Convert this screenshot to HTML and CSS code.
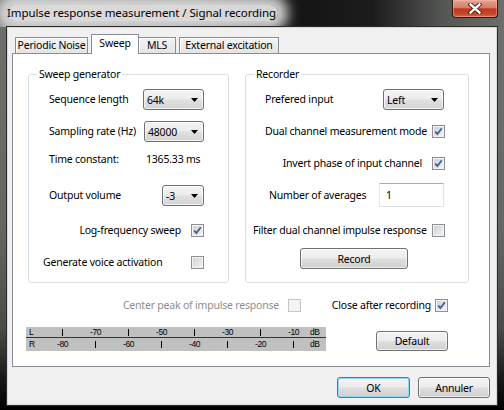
FILE: index.html
```html
<!DOCTYPE html>
<html>
<head>
<meta charset="utf-8">
<link rel="stylesheet" href="styles.css">
</head>
<body>
<div class="window">
  <div class="titlebar">
    <span class="title">Impulse response measurement / Signal recording</span>
    <div class="close">
      <svg width="14" height="11" viewBox="0 0 14 11">
        <path d="M2.5 1.5 L11.5 9.5 M11.5 1.5 L2.5 9.5" stroke="#3a1710" stroke-width="4.2" stroke-linecap="square" fill="none"/>
        <path d="M2.5 1.5 L11.5 9.5 M11.5 1.5 L2.5 9.5" stroke="#ffffff" stroke-width="2.4" stroke-linecap="square" fill="none"/>
      </svg>
    </div>
  </div>
  <div class="client">
    <div class="tabs">
      <div class="tab t1">Periodic Noise</div>
      <div class="tab t2 sel">Sweep</div>
      <div class="tab t3">MLS</div>
      <div class="tab t4">External excitation</div>
    </div>
    <div class="panel">
      <div class="groups">
        <div class="group g1">
          <div class="gtitle">Sweep generator</div>
          <div class="rows">
            <div class="row sb">
              <span>Sequence length</span>
              <div class="combo w61"><span>64k</span><svg width="7" height="4" viewBox="0 0 7 4"><path d="M0 0H7L3.5 4Z" fill="#000"/></svg></div>
            </div>
            <div class="row sb m10">
              <span>Sampling rate (Hz)</span>
              <div class="combo w60"><span>48000</span><svg width="7" height="4" viewBox="0 0 7 4"><path d="M0 0H7L3.5 4Z" fill="#000"/></svg></div>
            </div>
            <div class="row m6">
              <span class="tclabel">Time constant:</span>
              <span>1365.33 ms</span>
            </div>
            <div class="row sb m14">
              <span>Output volume</span>
              <div class="combo w42"><span>-3</span><svg width="7" height="4" viewBox="0 0 7 4"><path d="M0 0H7L3.5 4Z" fill="#000"/></svg></div>
            </div>
            <div class="row end m13">
              <span>Log-frequency sweep</span>
              <span class="cb"><svg width="9" height="9" viewBox="0 0 9 9"><path d="M1.2 4.6 L3.4 7 L7.8 1.2" stroke="#4a5f97" stroke-width="1.9" fill="none"/></svg></span>
            </div>
            <div class="row sb m10 out6">
              <span>Generate voice activation</span>
              <span class="cb"></span>
            </div>
          </div>
        </div>
        <div class="group g2">
          <div class="gtitle">Recorder</div>
          <div class="rows">
            <div class="row sb m1">
              <span>Prefered input</span>
              <div class="combo w61"><span>Left</span><svg width="7" height="4" viewBox="0 0 7 4"><path d="M0 0H7L3.5 4Z" fill="#000"/></svg></div>
            </div>
            <div class="row sb m10">
              <span>Dual channel measurement mode</span>
              <span class="cb cbr"><svg width="9" height="9" viewBox="0 0 9 9"><path d="M1.2 4.6 L3.4 7 L7.8 1.2" stroke="#4a5f97" stroke-width="1.9" fill="none"/></svg></span>
            </div>
            <div class="row end m10">
              <span>Invert phase of input channel</span>
              <span class="cb cbr"><svg width="9" height="9" viewBox="0 0 9 9"><path d="M1.2 4.6 L3.4 7 L7.8 1.2" stroke="#4a5f97" stroke-width="1.9" fill="none"/></svg></span>
            </div>
            <div class="row sb m10">
              <span class="in4">Number of averages</span>
              <div class="edit">1</div>
            </div>
            <div class="row sb m13 out12">
              <span>Filter dual channel impulse response</span>
              <span class="cb cbr"></span>
            </div>
            <div class="row m7 h21">
              <button class="btn record">Record</button>
            </div>
          </div>
        </div>
      </div>
      <div class="opts">
        <div class="opt1">
          <span class="dis">Center peak of impulse response</span>
          <span class="cb disabled"></span>
        </div>
        <div class="opt2">
          <span>Close after recording</span>
          <span class="cb"><svg width="9" height="9" viewBox="0 0 9 9"><path d="M1.2 4.6 L3.4 7 L7.8 1.2" stroke="#4a5f97" stroke-width="1.9" fill="none"/></svg></span>
        </div>
      </div>
      <div class="meterrow">
        <div class="meter">
          <div class="mrow mtop">
            <span class="ch">L</span><span><i class="tk"></i></span><span>-70</span><span><i class="tk"></i></span><span>-50</span><span><i class="tk"></i></span><span>-30</span><span><i class="tk"></i></span><span>-10</span><span class="db">dB</span>
          </div>
          <div class="mrow mbot">
            <span class="ch">R</span><span>-80</span><span><i class="tk"></i></span><span>-60</span><span><i class="tk"></i></span><span>-40</span><span><i class="tk"></i></span><span>-20</span><span><i class="tk"></i></span><span class="db">dB</span>
          </div>
        </div>
        <button class="btn default">Default</button>
      </div>
    </div>
    <div class="footer">
      <button class="btn ok">OK</button>
      <button class="btn cancel">Annuler</button>
    </div>
  </div>
</div>
</body>
</html>
```

FILE: styles.css
```css
* { box-sizing: border-box; }
html, body { margin: 0; padding: 0; }
body {
  width: 504px;
  height: 410px;
  overflow: hidden;
  font-family: "Noto Sans", "Open Sans", sans-serif;
  font-size: 10.5px;
  letter-spacing: -0.2px;
  line-height: 14px;
  color: #000;
}
.window {
  width: 504px;
  height: 410px;
  display: flex;
  flex-direction: column;
  background: linear-gradient(180deg, #6e706e 0%, #656765 55%, #4a4b4a 80%, #1a1a1a 92%, #000 100%);
}
.titlebar {
  height: 27px;
  flex: none;
  display: flex;
  justify-content: space-between;
  align-items: flex-start;
  overflow: hidden;
  background: linear-gradient(90deg, #7c7e7c 0%, #5e605e 40%, #151515 60%, #1c1c1c 74%, #555755 88%, #6c6e6c 100%);
}
.title {
  margin: 5px 0 0 7px;
  height: 16px;
  line-height: 16px;
  font-size: 11.5px;
  letter-spacing: -0.1px;
  padding-right: 2px;
  background: rgba(224, 224, 224, 0.94);
  box-shadow: 0 0 12px 10px rgba(224, 224, 224, 0.9);
  border-radius: 8px;
  white-space: nowrap;
}
.close {
  width: 46px;
  height: 18px;
  margin-right: 6px;
  border: 1px solid #3b1410;
  border-top: none;
  border-radius: 0 0 4px 4px;
  background: linear-gradient(180deg, #e3a493 0%, #d47e68 45%, #c13a1f 52%, #c64427 80%, #d8684a 100%);
  box-shadow: inset 0 0 0 1px rgba(255, 190, 175, 0.45);
  display: flex;
  align-items: center;
  justify-content: center;
}
.client {
  margin: 0 7px;
  height: 378px;
  flex: none;
  background: #f0f0f0;
  border: 1px solid #d6d9dc;
  box-shadow: 0 0 0 1px #2c2c2c;
  padding: 6px 6px 0 4px;
}
.tabs {
  display: flex;
  align-items: flex-end;
  height: 19px;
  padding-left: 3px;
  position: relative;
  z-index: 1;
}
.tab {
  height: 16px;
  line-height: 15px;
  border: 1px solid #898c95;
  border-bottom: none;
  background: linear-gradient(180deg, #f4f4f4 0%, #ececec 50%, #e3e3e3 100%);
  box-shadow: inset 1px 1px 0 #fdfdfd;
  text-align: center;
  white-space: nowrap;
}
.t1 { width: 73px; margin-right: 3px; }
.t2 { width: 48px; }
.t3 { width: 38px; margin-right: 3px; }
.t4 { width: 100px; }
.tab.sel {
  height: 20px;
  margin-bottom: -1px;
  background: #fff;
  box-shadow: none;
  line-height: 17px;
  margin-right: -1px;
}
.panel {
  height: 314px;
  background: #fff;
  border: 1px solid #898c95;
  padding: 20px 0 0 15px;
}
.groups { display: flex; gap: 16px; }
.group {
  height: 209px;
  border: 1px solid #d5dfe5;
  border-radius: 3px;
}
.g1 { width: 201px; padding: 0 24px 0 20px; }
.g2 { width: 224px; padding: 0 24px 0 19px; }
.gtitle {
  width: max-content;
  height: 14px;
  line-height: 14px;
  margin: -8px 0 0 -12px;
  padding: 0 2px;
  background: #fff;
}
.g2 .gtitle { margin-left: -11px; }
.rows { margin-top: 7px; }
.row {
  height: 22px;
  display: flex;
  align-items: center;
  white-space: nowrap;
}
.row.sb { justify-content: space-between; }
.row.end { justify-content: flex-end; gap: 10px; }
.m1 { margin-top: 1px; }
.m6 { margin-top: 6px; }
.m7 { margin-top: 7px; }
.m10 { margin-top: 10px; }
.m13 { margin-top: 13px; }
.m14 { margin-top: 14px; }
.h21 { height: 21px; }
.out6 { margin-left: -6px; }
.out12 { margin-left: -12px; }
.in4 { margin-left: 4px; }
.tclabel { width: 97px; }
.combo {
  height: 21px;
  border: 1px solid #707070;
  border-radius: 3px;
  background: linear-gradient(180deg, #f3f3f3 0%, #ececec 48%, #e0e0e0 52%, #d4d4d4 100%);
  box-shadow: inset 0 0 0 1px rgba(255, 255, 255, 0.65);
  display: flex;
  align-items: center;
  justify-content: space-between;
  padding: 1px 5px 0 3px;
}
.w61 { width: 61px; }
.w60 { width: 60px; }
.w42 { width: 42px; }
.cb {
  width: 13px;
  height: 13px;
  flex: none;
  border: 1px solid #8e8f8f;
  background: linear-gradient(135deg, #c9cdd3 0%, #e4e6e8 60%, #f5f5f5 100%);
  box-shadow: inset 0 0 0 1px #f4f4f4;
  display: flex;
  align-items: center;
  justify-content: center;
}
.cbr { margin-right: -1px; }
.cb.disabled {
  border-color: #c5c5c5;
  background: #f4f4f4;
  box-shadow: none;
}
.dis { color: #8d8d8d; }
.edit {
  width: 65px;
  height: 24px;
  border: 1px solid #dbdfe6;
  border-top-color: #abadb3;
  border-left-color: #e2e3ea;
  background: #fff;
  padding-left: 6px;
  line-height: 22px;
}
.btn {
  font-family: inherit;
  font-size: 10.5px;
  letter-spacing: -0.2px;
  color: #000;
  height: 21px;
  padding: 0;
  border: 1px solid #707070;
  border-radius: 3px;
  background: linear-gradient(180deg, #f3f3f3 0%, #ececec 48%, #dedede 52%, #d0d0d0 100%);
  box-shadow: inset 0 0 0 1px rgba(255, 255, 255, 0.6);
  text-align: center;
  line-height: 18px;
}
.record { width: 108px; margin-left: 35px; }
.opts {
  display: flex;
  margin-top: 11px;
  height: 22px;
  white-space: nowrap;
}
.opt1 {
  width: 273px;
  display: flex;
  justify-content: flex-end;
  align-items: center;
  gap: 9px;
}
.opt2 {
  width: 147px;
  display: flex;
  justify-content: flex-end;
  align-items: center;
  gap: 4px;
}
.meterrow {
  display: flex;
  align-items: flex-start;
  margin-top: 11px;
}
.meter {
  width: 300px;
  height: 24px;
  margin-left: -2px;
  background: #c0c0c0;
  font-family: "Liberation Sans", Arial, sans-serif;
  font-size: 8.5px;
  letter-spacing: -0.4px;
  color: #000;
}
.mrow {
  display: grid;
  grid-template-columns: 20px repeat(8, 33px) 1fr;
  align-items: center;
}
.mrow span { text-align: center; line-height: 10px; }
.mtop { height: 11px; border-bottom: 1px solid #333; }
.mbot { height: 12px; }
.mrow .ch { text-align: left; padding-left: 3px; }
.mrow .db { text-align: left; }
.tk {
  display: inline-block;
  width: 1px;
  height: 7px;
  background: #000;
  vertical-align: middle;
}
.default { width: 72px; height: 20px; margin: 4px 0 0 50px; }
.footer {
  display: flex;
  justify-content: flex-end;
  gap: 8px;
  margin-top: 10px;
}
.ok {
  width: 73px;
  border-color: #3c7fb1;
  box-shadow: inset 0 0 0 1px #92d6f4;
}
.cancel { width: 72px; }
```
